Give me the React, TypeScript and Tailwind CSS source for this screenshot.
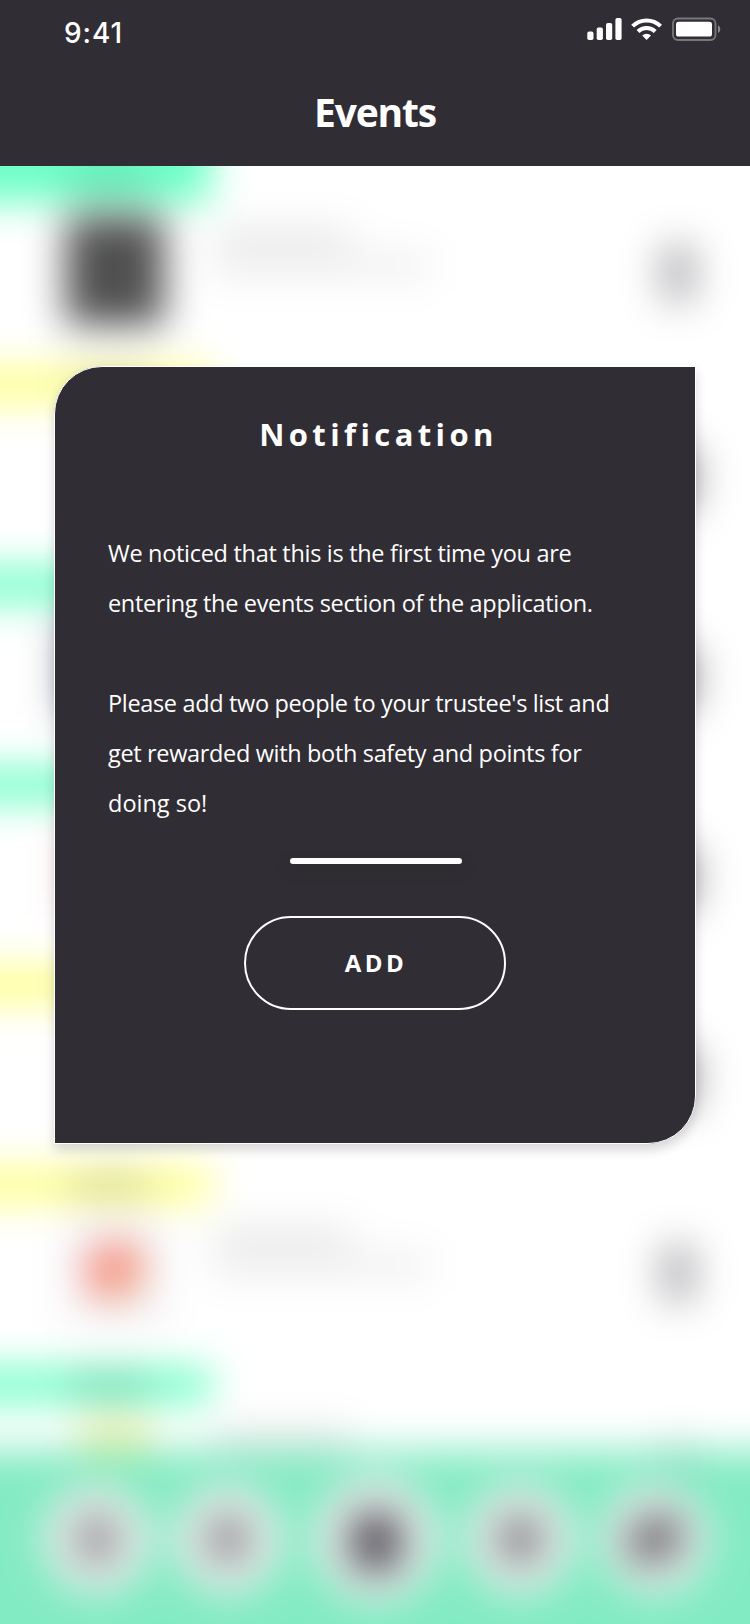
import React from "react";

type EventRow = {
  bar: string;
  image: React.ReactNode;
  icon: string;
};

const darkIcon = "mt-[10px] h-[62px] w-[38px] bg-[#a0a0a4]";
const lightIcon = "h-[58px] w-[34px] bg-[#b2b2b6]";

const rows: EventRow[] = [
  {
    bar: "h-[96px] bg-[#6cffc6]",
    image: <div className="h-[108px] w-[98px] bg-[#505050]" />,
    icon: lightIcon,
  },
  {
    bar: "h-[34px] bg-[#ffff88]",
    image: <div className="h-[100px] w-[80px] bg-[#fbfbfb]" />,
    icon: darkIcon,
  },
  {
    bar: "h-[34px] bg-[#70ffc8]",
    image: <div className="h-[100px] w-[110px] bg-[#9ea2b2]" />,
    icon: darkIcon,
  },
  {
    bar: "h-[34px] bg-[#70ffc8]",
    image: <div className="h-[100px] w-[100px] bg-[#f7dcdc]" />,
    icon: darkIcon,
  },
  {
    bar: "h-[34px] bg-[#ffff88]",
    image: <div className="h-[100px] w-[80px] bg-[#fbfbfb]" />,
    icon: darkIcon,
  },
  {
    bar: "h-[34px] bg-[#ffff88]",
    image: (
      <div className="flex h-[108px] w-[100px] items-center justify-center bg-[#f4f3f6]">
        <div className="h-[60px] w-[62px] rounded-full bg-linear-to-br from-[#eea0b0] via-[#fa8a72] to-[#d8dcc0]" />
      </div>
    ),
    icon: lightIcon,
  },
  {
    bar: "h-[34px] bg-[#70ffc8]",
    image: <div className="h-[100px] w-[72px] bg-[#f2eeb0]" />,
    icon: lightIcon,
  },
];

const tabs = [
  { disc: "size-[108px]", glyph: "h-[44px] w-[36px] bg-[#88868b]" },
  { disc: "size-[108px] ml-[23px]", glyph: "h-[42px] w-[36px] bg-[#807e83]" },
  { disc: "size-[124px] ml-[32px]", glyph: "h-[58px] w-[50px] bg-[#55515a] mt-[6px]" },
  { disc: "size-[108px] ml-[28px]", glyph: "h-[42px] w-[40px] bg-[#77757a]" },
  { disc: "size-[108px] ml-[27px]", glyph: "h-[42px] w-[54px] bg-[#6c696f] -rotate-30" },
];

function StatusIcons() {
  return (
    <svg width="136" height="26" viewBox="586 16 136 26" fill="none">
      <g fill="#fff">
        <rect x="587.3" y="31.6" width="6.2" height="8.4" rx="1.8" />
        <rect x="596.7" y="27.5" width="6.2" height="12.5" rx="1.8" />
        <rect x="606" y="23" width="6.2" height="17" rx="1.8" />
        <rect x="615.4" y="18" width="6.2" height="22" rx="1.8" />
      </g>
      <g stroke="#fff" strokeWidth="4">
        <path d="M632.6 26.1a20 20 0 0 1 28 0" />
        <path d="M638 31.5a12.3 12.3 0 0 1 17.2 0" />
      </g>
      <path d="M646.6 40l-4.4-4.5a6.3 6.3 0 0 1 8.8 0z" fill="#fff" />
      <rect x="673" y="18.5" width="42.5" height="21.5" rx="5" stroke="#79777c" strokeWidth="1.8" />
      <rect x="676" y="21.7" width="36" height="14.9" rx="2.6" fill="#fff" />
      <path d="M718 25.2c3 1.2 3 6.5 0 7.7z" fill="#8a888d" />
    </svg>
  );
}

function Row({ bar, image, icon }: EventRow) {
  return (
    <div>
      <div className={`flex w-[271px] flex-col items-center justify-end pb-[8px] pl-[68px] ${bar}`}>
        <div className="h-[18px] w-[78px] bg-black/20" />
      </div>
      <div className="flex h-[166px] pt-[15px]">
        <div className="flex w-[270px] justify-center pl-[80px]">{image}</div>
        <div className="flex w-[340px] flex-col gap-[6px] pt-[12px] pl-[4px]">
          <div className="h-[18px] w-[136px] bg-[#e2e2e2]" />
          <div className="h-[26px] w-[216px] bg-[#efefef]" />
        </div>
        <div className="flex h-[112px] w-[256px] items-center justify-center">
          <div className={`rounded-lg ${icon}`} />
        </div>
      </div>
    </div>
  );
}

function Backdrop() {
  return (
    <div className="-mx-[60px] -mt-[60px] h-[1578px] shrink-0 overflow-hidden bg-white blur-[19.5px]">
      {rows.map((row, i) => (
        <Row key={i} {...row} />
      ))}
      <div className="relative -mt-[118px] flex h-[260px] items-start bg-[#7ceac1]/95 pt-[27px] pl-[103px]">
        <div className="flex items-center">
          {tabs.map((tab, i) => (
            <div
              key={i}
              className={`flex items-center justify-center rounded-full bg-[#e6ebe9] ${tab.disc}`}
            >
              <div className={`rounded-xl ${tab.glyph}`} />
            </div>
          ))}
        </div>
      </div>
    </div>
  );
}

function NotificationCard() {
  return (
    <section className="absolute top-[200px] left-[54px] flex h-[778px] w-[642px] flex-col items-center rounded-tl-[48px] rounded-br-[48px] border border-white bg-[#312d34] text-white shadow-[0_6px_12px_rgba(0,0,0,0.16)]">
      <h2 className="mt-[45px] h-[44px] pl-[7px] text-[31px] leading-[44px] font-bold tracking-[4.4px] whitespace-nowrap">
        Notification
      </h2>
      <div className="mt-[72px] w-full pl-[53px] text-[23.5px] leading-[50px] whitespace-nowrap">
        <p className="tracking-[-0.3px]">We noticed that this is the first time you are</p>
        <p className="tracking-[-0.33px]">entering the events section of the application.</p>
        <p className="mt-[50px] tracking-[-0.34px]">Please add two people to your trustee's list and</p>
        <p className="tracking-[-0.34px]">get rewarded with both safety and points for</p>
        <p>doing so!</p>
      </div>
      <div className="mt-[30px] ml-[2px] h-[6px] w-[172px] shrink-0 rounded-[3px] bg-white shadow-[0_6px_12px_rgba(44,44,44,0.9)]" />
      <button className="mt-[52px] h-[94px] w-[262px] shrink-0 rounded-full border-2 border-white pl-[2px] text-[24px] font-bold tracking-[3.4px]">
        ADD
      </button>
    </section>
  );
}

export default function App() {
  return (
    <div className="flex h-[1624px] w-[750px] flex-col overflow-hidden bg-white font-['Open_Sans','Noto_Sans',sans-serif]">
      <header className="relative z-10 flex h-[166px] shrink-0 flex-col bg-[#312d34] text-white">
        <div className="flex h-[66px] justify-between pt-[16px] pr-[28px] pl-[64px]">
          <span className="font-['Inter',sans-serif] text-[28px] leading-[35px] font-medium tracking-[0.9px]">
            9:41
          </span>
          <StatusIcons />
        </div>
        <h1 className="text-center text-[39px] leading-[91px] font-bold tracking-[-1.2px]">Events</h1>
      </header>
      <main className="relative h-[1458px] overflow-hidden">
        <Backdrop />
        <NotificationCard />
      </main>
    </div>
  );
}
